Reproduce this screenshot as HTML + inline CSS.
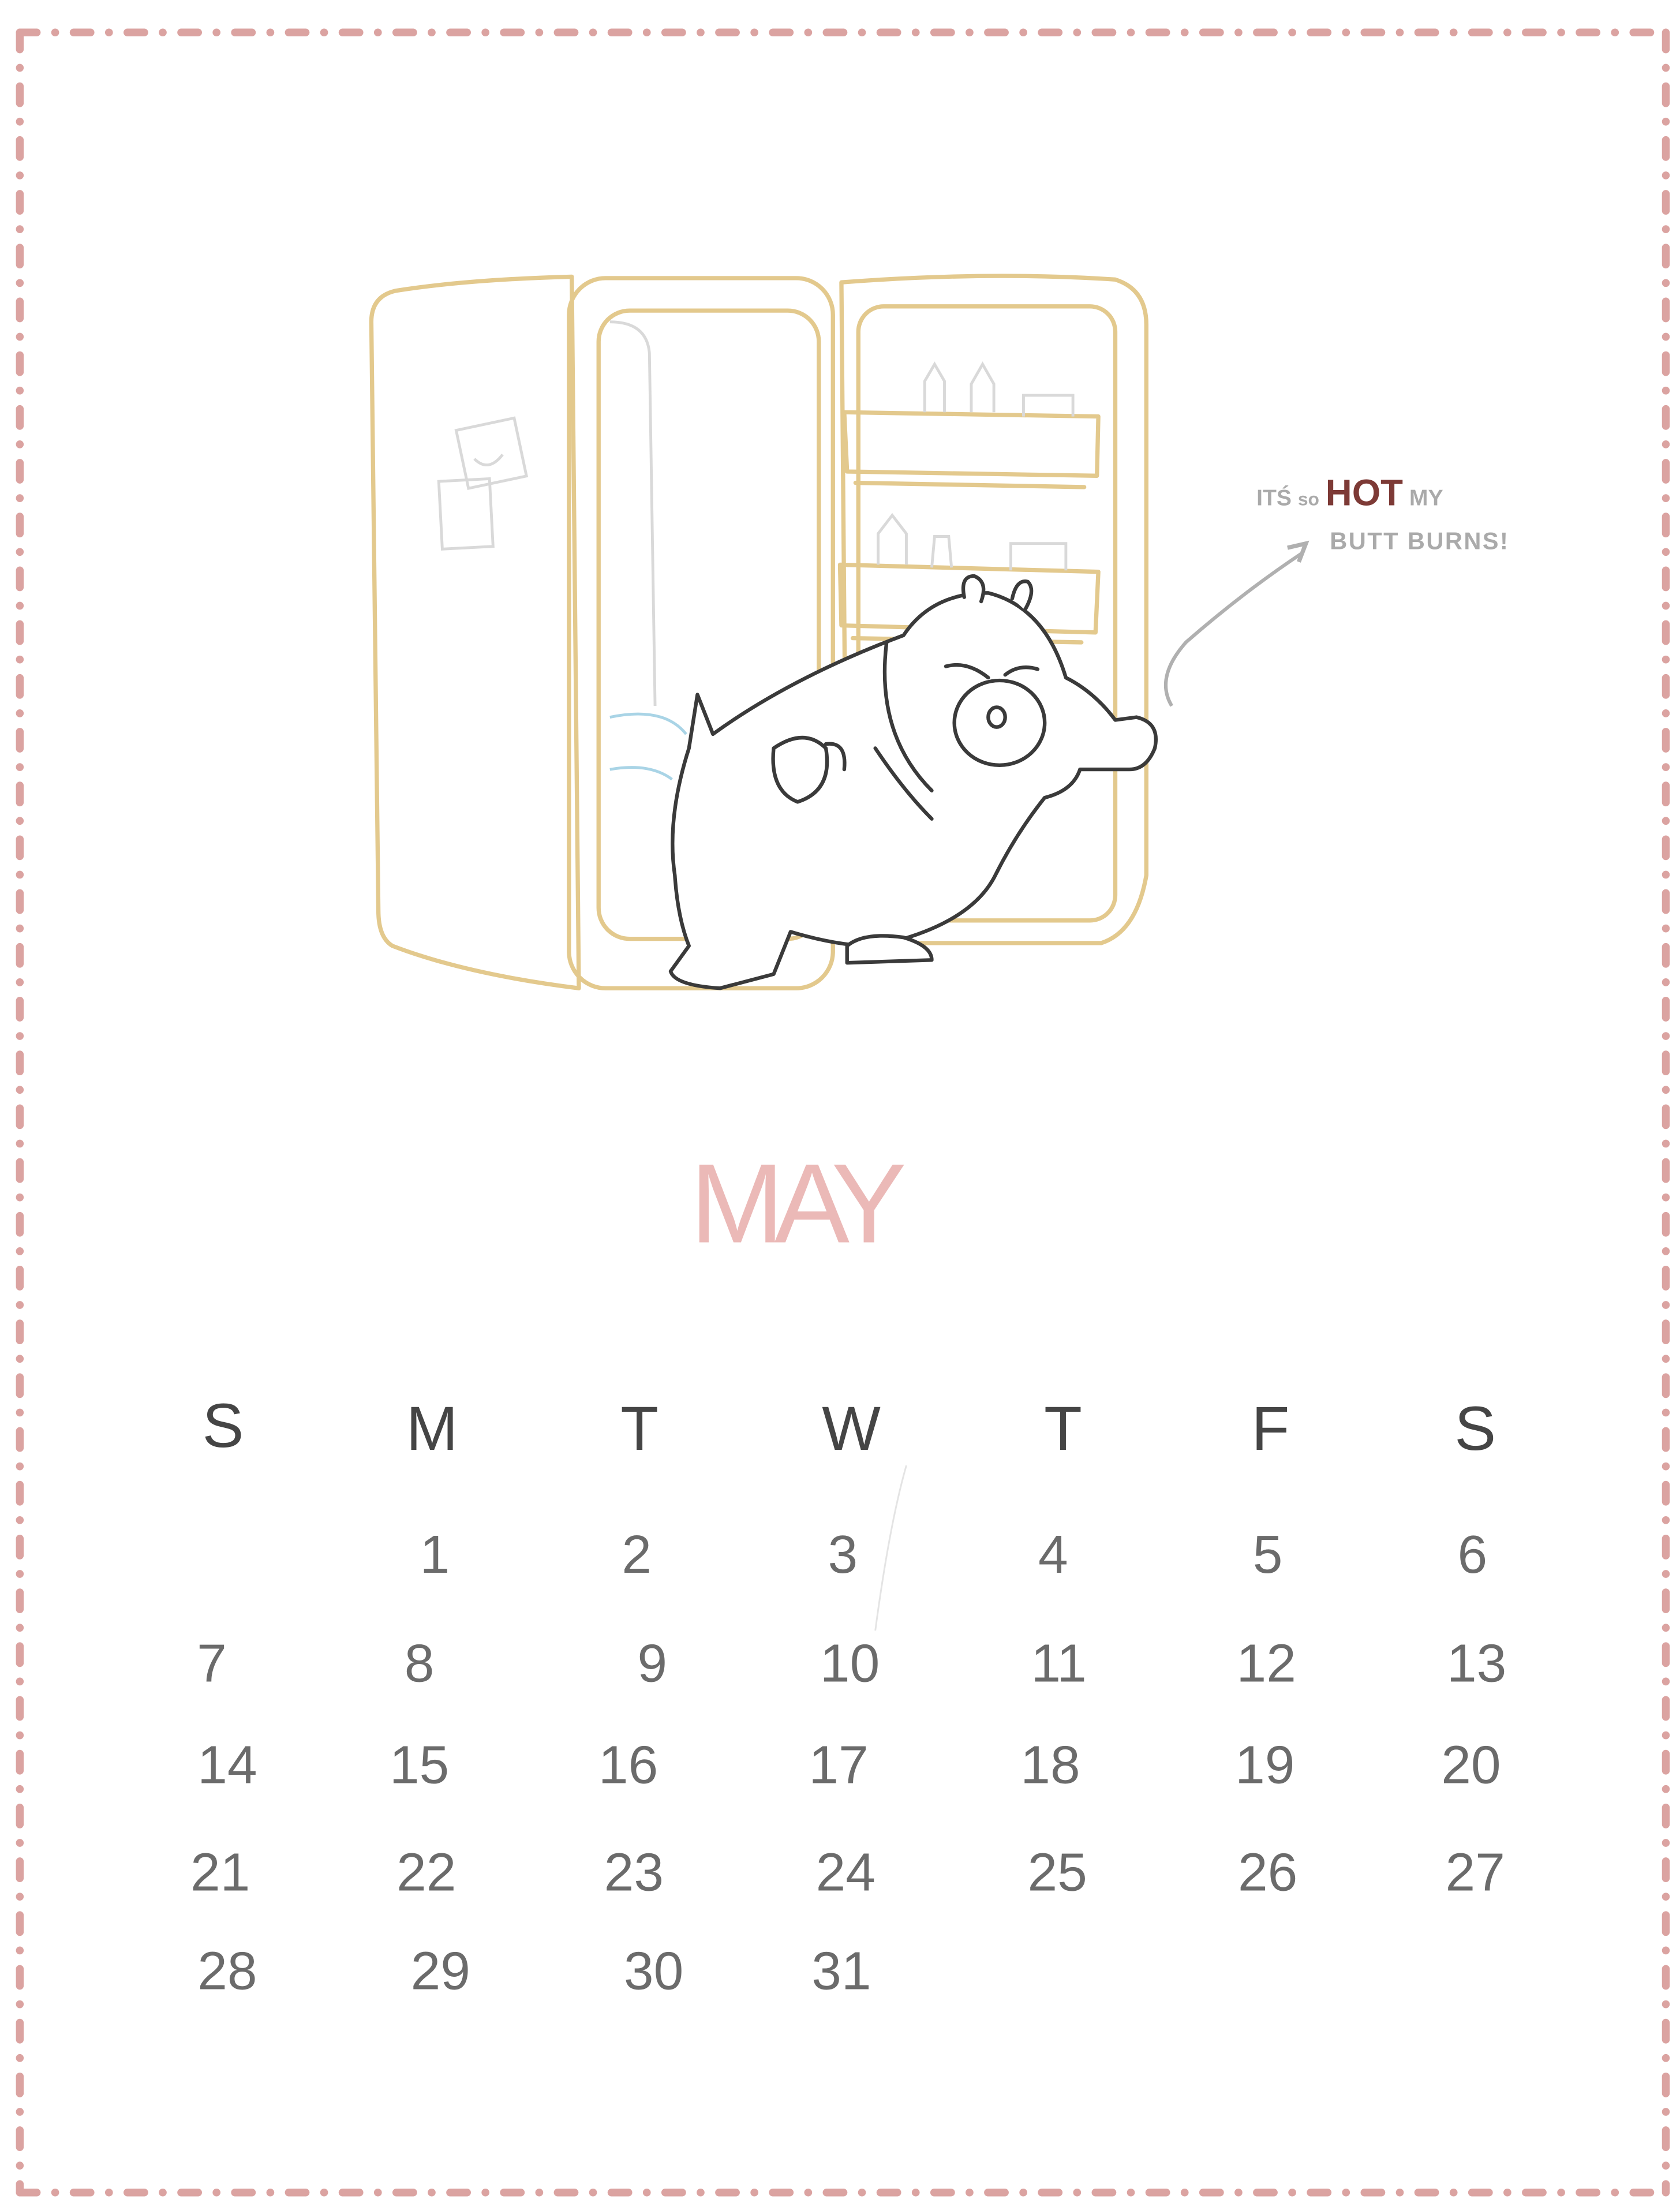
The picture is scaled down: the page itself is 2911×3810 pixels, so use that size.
<!DOCTYPE html>
<html><head><meta charset="utf-8"><style>
html,body{margin:0;padding:0;background:#fff;}
svg{display:block;}
</style></head><body>
<svg width="2911" height="3810" viewBox="0 0 1190 1557.6" xmlns="http://www.w3.org/2000/svg">
<rect width="1190" height="1557.6" fill="#fff"/>
<g stroke="#dba3a1" stroke-width="5.5" stroke-linecap="round" fill="none" stroke-dasharray="12 13 0.1 13">
<path d="M14 23 H1180"/>
<path d="M14 23 V1553"/>
<path d="M1180 23 V1553"/>
<path d="M14 1553 H1180"/>
</g>
<g fill="none" stroke="#e3c98d" stroke-width="3" stroke-linecap="round" stroke-linejoin="round">
<path d="M280 206 Q330 198 405 196 L410 700 Q330 690 278 670 Q268 664 268 645 L263 228 Q263 210 280 206 Z"/>
<rect x="403" y="197" width="187" height="503" rx="26"/>
<rect x="424" y="220" width="156" height="445" rx="22"/>
<path d="M596 200 Q700 192 790 198 Q812 205 812 230 L812 620 Q805 660 780 668 L600 668 Z"/>
<rect x="608" y="217" width="182" height="435" rx="18"/>
<path d="M598 292 L778 295 L777 337 L600 334 Z"/>
<path d="M606 342 L768 345"/>
<path d="M595 400 L778 405 L776 448 L596 443 Z"/>
<path d="M604 452 L766 455"/>
</g>
<g fill="none" stroke="#d9d9d9" stroke-width="2">
<path d="M432 228 Q458 228 460 250 L464 500"/>
<rect x="312" y="340" width="36" height="48" transform="rotate(-3 330 364)"/>
<rect x="327" y="300" width="42" height="42" transform="rotate(-12 348 321)"/>
<path d="M336 325 Q346 335 356 322"/>
<path d="M655 292 L655 270 L662 258 L669 270 L669 292 M688 292 L688 272 L696 258 L704 272 L704 292 M725 295 L725 280 L760 280 L760 295"/>
<path d="M622 400 L622 378 L632 365 L642 378 L642 400 M660 402 L662 380 L672 380 L674 402 M716 404 L716 385 L755 385 L755 404"/>
</g>
<g fill="none" stroke="#a9d4e6" stroke-width="2"><path d="M432 508 Q470 500 486 520 M432 545 Q460 540 476 552"/></g>
<g fill="#fff" stroke="#3a3a3a" stroke-width="2.6" stroke-linecap="round" stroke-linejoin="round">
<path d="M488 530 L494 492 L505 520 Q560 480 640 450 Q660 420 700 420 Q740 430 755 480 Q775 490 790 510 L805 508 Q822 512 818 530 Q812 545 800 545 L765 545 Q760 560 740 565 Q720 590 705 620 Q690 650 640 665 L630 670 Q600 672 560 660 L548 690 L510 700 Q478 698 475 688 L488 670 Q480 650 478 620 Q472 580 488 530 Z"/>
<path d="M683 423 Q680 408 690 408 Q700 412 695 426"/>
<path d="M717 424 Q720 410 728 412 Q734 418 726 432"/>
<ellipse cx="708" cy="512" rx="32" ry="30" fill="none"/>
<ellipse cx="706" cy="508" rx="6" ry="7" fill="none"/>
<path d="M670 472 Q685 468 700 480 M712 478 Q722 470 735 474" fill="none"/>
<path d="M600 670 Q612 660 640 664 Q660 670 660 680 L600 682 Z"/>
<path d="M548 530 Q545 560 565 568 Q590 560 585 530 Q570 515 548 530 Z" fill="none"/>
<path d="M585 527 Q600 525 598 545" fill="none"/>
<path d="M628 455 Q620 520 660 560 M620 530 Q640 560 660 580" fill="none"/>
</g>
<path d="M830 500 Q818 480 840 455 Q880 420 922 392" fill="none" stroke="#b0b0b0" stroke-width="2.5"/>
<path d="M912 388 L925 385 L920 398" fill="none" stroke="#b0b0b0" stroke-width="3"/>
<g font-family="Liberation Sans, sans-serif" fill="#aaa" font-weight="bold">
<text x="890" y="358" font-size="16">ITŚ <tspan font-size="13">so</tspan> <tspan fill="#7d3a36" font-size="26">HOT</tspan> MY</text>
<text x="942" y="389" font-size="17" letter-spacing="1">BUTT BURNS!</text>
</g>
<text x="562" y="880" text-anchor="middle" font-family="Liberation Sans, sans-serif" font-size="80" fill="#ebb9b7" letter-spacing="-7">MAY</text>
<g font-family="Liberation Sans, sans-serif" font-size="44" fill="#454545" text-anchor="middle">
<text x="158" y="1025">S</text><text x="306" y="1027">M</text><text x="453" y="1027">T</text><text x="603" y="1027">W</text><text x="753" y="1027">T</text><text x="900" y="1027">F</text><text x="1045" y="1027">S</text>
</g>
<path d="M642 1038 Q630 1080 620 1155" stroke="#e4e4e4" stroke-width="1.2" fill="none"/>
<g font-family="Liberation Sans, sans-serif" font-size="38" fill="#6b6b6b" text-anchor="middle">
<text x="308" y="1114">1</text><text x="451" y="1114">2</text><text x="597" y="1114">3</text><text x="746" y="1114">4</text><text x="898" y="1114">5</text><text x="1043" y="1114">6</text>
<text x="150" y="1191">7</text><text x="297" y="1191">8</text><text x="462" y="1191">9</text><text x="602" y="1191">10</text><text x="750" y="1191">11</text><text x="897" y="1191">12</text><text x="1046" y="1191">13</text>
<text x="161" y="1263">14</text><text x="297" y="1263">15</text><text x="445" y="1263">16</text><text x="594" y="1263">17</text><text x="744" y="1263">18</text><text x="896" y="1263">19</text><text x="1042" y="1263">20</text>
<text x="156" y="1339">21</text><text x="302" y="1339">22</text><text x="449" y="1339">23</text><text x="599" y="1339">24</text><text x="749" y="1339">25</text><text x="898" y="1339">26</text><text x="1045" y="1339">27</text>
<text x="161" y="1409">28</text><text x="312" y="1409">29</text><text x="463" y="1409">30</text><text x="596" y="1409">31</text>
</g>
</svg>
</body></html>
